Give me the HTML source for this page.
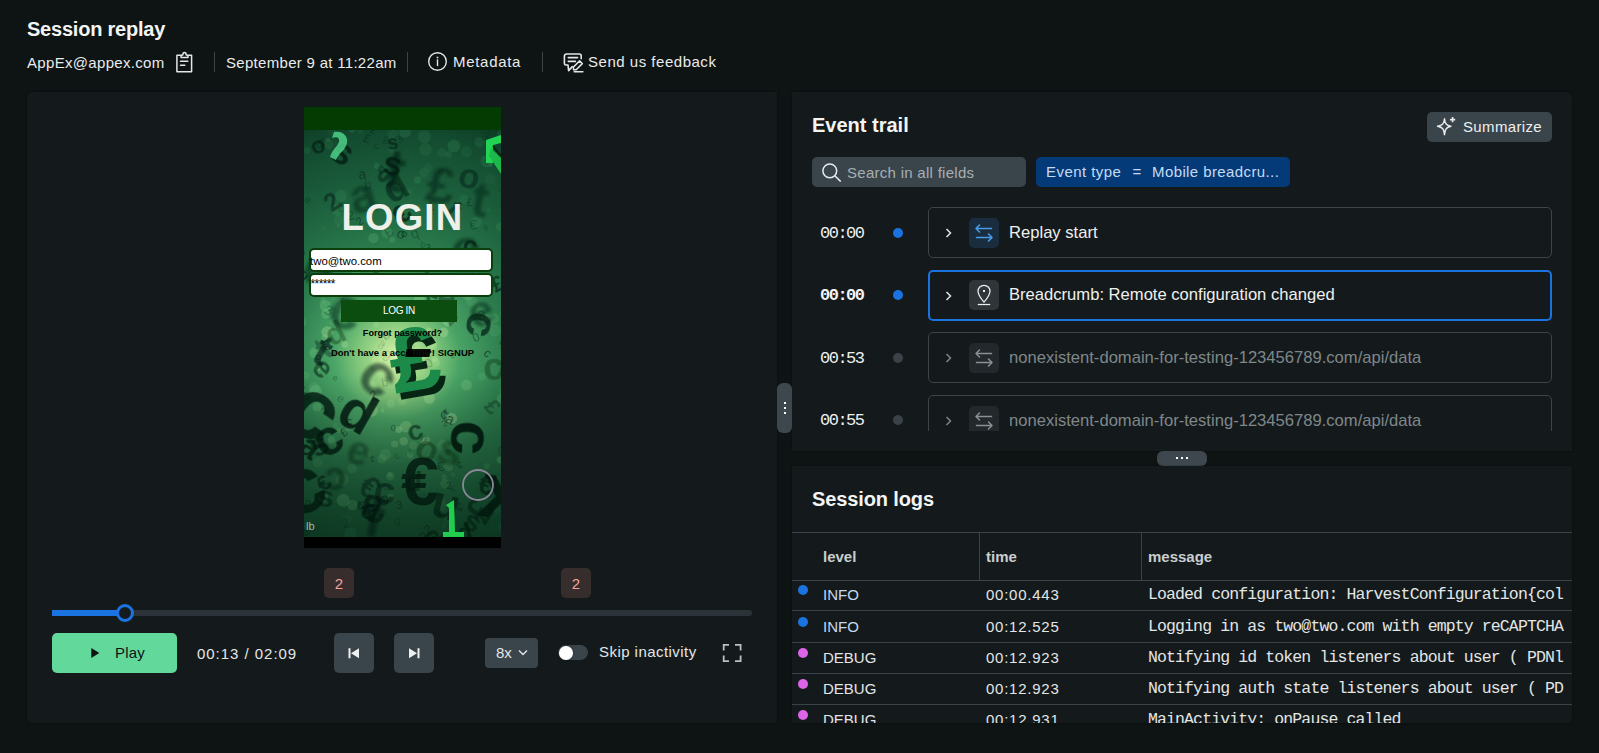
<!DOCTYPE html>
<html><head><meta charset="utf-8">
<style>
*{box-sizing:border-box;margin:0;padding:0}
html,body{width:1599px;height:753px;overflow:hidden;background:#0e1313;font-family:"Liberation Sans",sans-serif;color:#eef0f1}
.abs{position:absolute}
.t{position:absolute;white-space:nowrap;line-height:1}
.sep{position:absolute;width:1px;background:#3b4348}
.panel{position:absolute;background:#141a1b;box-shadow:0 0 1.5px rgba(0,0,0,0.55)}
.btn{position:absolute;background:#3a444b;border-radius:5px}
.card{position:absolute;left:928px;width:624px;height:51px;border:1px solid #3b444a;border-radius:5px;background:#141a1b}
.ico{position:absolute;left:40px;top:10px;width:30px;height:30px;border-radius:5px;background:#2b3134}
.mono{font-family:"Liberation Mono",monospace}
</style></head>
<body>
<!-- header -->
<div class="t" style="left:27px;top:19px;font-size:20px;letter-spacing:-0.22px;font-weight:700;color:#f3f4f4">Session replay</div>
<div class="t" style="left:27px;top:55px;font-size:15px;letter-spacing:0.32px;color:#e9ebec">AppEx@appex.com</div>
<div class="sep" style="left:214px;top:52px;height:20px"></div>
<div class="t" style="left:226px;top:55px;font-size:15px;letter-spacing:0.3px;color:#e9ebec">September 9 at 11:22am</div>
<div class="sep" style="left:407px;top:52px;height:20px"></div>
<div class="t" style="left:453px;top:54px;font-size:15px;letter-spacing:0.7px;color:#e9ebec">Metadata</div>
<div class="sep" style="left:542px;top:52px;height:20px"></div>
<div class="t" style="left:588px;top:54px;font-size:15px;letter-spacing:0.52px;color:#e9ebec">Send us feedback</div>


<svg class="abs" style="left:170px;top:48px" width="30" height="28" viewBox="0 0 30 28" fill="none" stroke="#e4e6e7" stroke-width="1.6" stroke-linejoin="round" stroke-linecap="round">
<path d="M11 7.2 H6.9 V23.8 H21.6 V7.2 H18" stroke-width="1.5"/>
<path d="M11 9.6 H18 V8.3 C18 7.6 17.5 7.1 16.7 7.1 H16.2 C16.2 5.4 15.5 4.6 14.5 4.6 C13.5 4.6 12.8 5.4 12.8 7.1 H12.3 C11.5 7.1 11 7.6 11 8.3 Z" stroke-width="1.5"/>
<path d="M10.5 13.3 H17.8 M10.5 17.3 H14.8" stroke-width="1.5"/>
</svg>
<svg class="abs" style="left:427px;top:51px" width="21" height="21" viewBox="0 0 21 21" fill="none" stroke="#e4e6e7" stroke-width="1.4">
<circle cx="10.5" cy="10.5" r="8.8"/>
<path d="M10.5 8.3 V15.1" stroke-width="1.4"/>
<rect x="9.7" y="5.7" width="1.6" height="1.6" fill="#e4e6e7" stroke="none"/>
</svg>
<svg class="abs" style="left:558px;top:48px" width="30" height="28" viewBox="0 0 30 28" fill="none" stroke="#e4e6e7" stroke-width="1.6" stroke-linejoin="round" stroke-linecap="round">
<path d="M23.2 10.8 V8 A2 2 0 0 0 21.2 6 H8.4 A2 2 0 0 0 6.4 8 V15.4 A1.6 1.6 0 0 0 8 17 H10 L10.6 22.6 L14.3 18.6"/>
<path d="M10.3 9.6 H19.6 M10.3 13.4 H17.4"/>
<path d="M21.6 12.9 L24.3 15.6 L18.2 21.7 H15.5 V19 Z" stroke-width="1.5"/>
<path d="M16.2 23.8 H24.9" stroke-width="1.5"/>
</svg>

<!-- left panel -->
<div class="panel" style="left:27px;top:92px;width:750px;height:631px;border-radius:5px 0 0 5px"></div>


<!-- phone -->
<div class="abs" style="left:304px;top:107px;width:197px;height:441px;overflow:hidden;background:#000">
  <div class="abs" style="left:0;top:0;width:197px;height:23px;background:#033b02"></div>
  <!--PHONEBG-->
<svg class="abs" style="left:0;top:23px" width="197" height="407" viewBox="0 0 197 407">
<defs>
<radialGradient id="g0" cx="92" cy="228" r="250" gradientUnits="userSpaceOnUse">
<stop offset="0" stop-color="#a8dc8c"/>
<stop offset="0.1" stop-color="#7cc679"/>
<stop offset="0.25" stop-color="#4aa466"/>
<stop offset="0.45" stop-color="#2a7a4c"/>
<stop offset="0.7" stop-color="#1b5e3c"/>
<stop offset="0.9" stop-color="#134b30"/>
<stop offset="1" stop-color="#0d3d26"/>
</radialGradient>
<radialGradient id="g1" cx="94" cy="228" r="62" gradientUnits="userSpaceOnUse">
<stop offset="0" stop-color="#e8f8b8" stop-opacity="0.8"/>
<stop offset="0.5" stop-color="#c8ec98" stop-opacity="0.35"/>
<stop offset="1" stop-color="#b8e890" stop-opacity="0"/>
</radialGradient>
<linearGradient id="g2" x1="0" y1="0" x2="0" y2="1">
<stop offset="0" stop-color="#000" stop-opacity="0"/>
<stop offset="0.6" stop-color="#000" stop-opacity="0"/>
<stop offset="1" stop-color="#021a0c" stop-opacity="0.5"/>
</linearGradient>
<filter id="b1" x="-30%" y="-30%" width="160%" height="160%"><feGaussianBlur stdDeviation="1.4"/></filter>
<filter id="b2" x="-30%" y="-30%" width="160%" height="160%"><feGaussianBlur stdDeviation="0.7"/></filter>
<filter id="b0" x="-30%" y="-30%" width="160%" height="160%"><feGaussianBlur stdDeviation="0.35"/></filter>
</defs>
<rect width="197" height="407" fill="url(#g0)"/>
<circle cx="88.6" cy="228.4" r="6.2" fill="#c8f5a8" fill-opacity="0.19" filter="url(#b2)"/>
<circle cx="100.1" cy="239.9" r="2.8" fill="#c8f5a8" fill-opacity="0.20" filter="url(#b2)"/>
<circle cx="125.4" cy="325.7" r="2.4" fill="#78d28a" fill-opacity="0.16" filter="url(#b2)"/>
<circle cx="13.8" cy="332.6" r="5.1" fill="#78d28a" fill-opacity="0.11" filter="url(#b2)"/>
<circle cx="198.3" cy="397.3" r="4.9" fill="#4fb070" fill-opacity="0.13" filter="url(#b2)"/>
<circle cx="27.6" cy="1.3" r="4.4" fill="#4fb070" fill-opacity="0.07" filter="url(#b2)"/>
<circle cx="34.4" cy="95.9" r="2.1" fill="#4fb070" fill-opacity="0.12" filter="url(#b2)"/>
<circle cx="86.2" cy="346.3" r="4.3" fill="#78d28a" fill-opacity="0.23" filter="url(#b2)"/>
<circle cx="98.5" cy="271.2" r="4.1" fill="#c8f5a8" fill-opacity="0.16" filter="url(#b2)"/>
<circle cx="201.5" cy="410.2" r="5.8" fill="#4fb070" fill-opacity="0.14" filter="url(#b2)"/>
<circle cx="60.3" cy="90.8" r="3.3" fill="#4fb070" fill-opacity="0.07" filter="url(#b2)"/>
<circle cx="153.6" cy="162.0" r="5.8" fill="#78d28a" fill-opacity="0.18" filter="url(#b2)"/>
<circle cx="193.3" cy="348.3" r="2.0" fill="#78d28a" fill-opacity="0.14" filter="url(#b2)"/>
<circle cx="183.4" cy="191.0" r="6.4" fill="#78d28a" fill-opacity="0.18" filter="url(#b2)"/>
<circle cx="10.1" cy="257.5" r="5.5" fill="#78d28a" fill-opacity="0.15" filter="url(#b2)"/>
<circle cx="13.0" cy="133.7" r="6.3" fill="#78d28a" fill-opacity="0.25" filter="url(#b2)"/>
<circle cx="19.4" cy="97.7" r="2.5" fill="#4fb070" fill-opacity="0.07" filter="url(#b2)"/>
<circle cx="160.0" cy="69.1" r="4.5" fill="#4fb070" fill-opacity="0.11" filter="url(#b2)"/>
<circle cx="34.5" cy="300.2" r="2.6" fill="#78d28a" fill-opacity="0.23" filter="url(#b2)"/>
<circle cx="19.1" cy="170.5" r="3.0" fill="#78d28a" fill-opacity="0.15" filter="url(#b2)"/>
<circle cx="196.0" cy="330.0" r="3.4" fill="#78d28a" fill-opacity="0.28" filter="url(#b2)"/>
<circle cx="38.6" cy="159.4" r="5.8" fill="#78d28a" fill-opacity="0.23" filter="url(#b2)"/>
<circle cx="15.8" cy="407.5" r="3.0" fill="#4fb070" fill-opacity="0.09" filter="url(#b2)"/>
<circle cx="154.9" cy="132.2" r="3.3" fill="#78d28a" fill-opacity="0.11" filter="url(#b2)"/>
<circle cx="13.7" cy="238.0" r="3.1" fill="#c8f5a8" fill-opacity="0.22" filter="url(#b2)"/>
<circle cx="71.9" cy="184.0" r="6.3" fill="#c8f5a8" fill-opacity="0.20" filter="url(#b2)"/>
<circle cx="113.9" cy="356.3" r="2.8" fill="#78d28a" fill-opacity="0.13" filter="url(#b2)"/>
<circle cx="183.0" cy="336.0" r="3.1" fill="#78d28a" fill-opacity="0.14" filter="url(#b2)"/>
<circle cx="148.1" cy="387.1" r="2.9" fill="#4fb070" fill-opacity="0.17" filter="url(#b2)"/>
<circle cx="177.6" cy="246.7" r="3.9" fill="#78d28a" fill-opacity="0.12" filter="url(#b2)"/>
<circle cx="3.0" cy="396.4" r="3.1" fill="#4fb070" fill-opacity="0.14" filter="url(#b2)"/>
<circle cx="48.2" cy="338.5" r="4.7" fill="#78d28a" fill-opacity="0.16" filter="url(#b2)"/>
<circle cx="31.3" cy="295.4" r="2.3" fill="#78d28a" fill-opacity="0.15" filter="url(#b2)"/>
<circle cx="110.8" cy="350.5" r="4.8" fill="#78d28a" fill-opacity="0.16" filter="url(#b2)"/>
<circle cx="184.9" cy="80.1" r="2.1" fill="#4fb070" fill-opacity="0.09" filter="url(#b2)"/>
<circle cx="87.3" cy="20.2" r="2.8" fill="#4fb070" fill-opacity="0.10" filter="url(#b2)"/>
<circle cx="113.4" cy="49.9" r="3.6" fill="#4fb070" fill-opacity="0.17" filter="url(#b2)"/>
<circle cx="198.0" cy="268.9" r="5.1" fill="#78d28a" fill-opacity="0.22" filter="url(#b2)"/>
<circle cx="24.1" cy="9.6" r="2.1" fill="#4fb070" fill-opacity="0.17" filter="url(#b2)"/>
<circle cx="140.1" cy="396.5" r="2.1" fill="#4fb070" fill-opacity="0.14" filter="url(#b2)"/>
<circle cx="94.8" cy="299.6" r="3.4" fill="#c8f5a8" fill-opacity="0.30" filter="url(#b2)"/>
<circle cx="10.6" cy="222.7" r="5.3" fill="#78d28a" fill-opacity="0.28" filter="url(#b2)"/>
<circle cx="147.6" cy="288.4" r="5.6" fill="#c8f5a8" fill-opacity="0.28" filter="url(#b2)"/>
<circle cx="67.8" cy="280.7" r="6.1" fill="#c8f5a8" fill-opacity="0.27" filter="url(#b2)"/>
<circle cx="81.4" cy="324.7" r="5.9" fill="#78d28a" fill-opacity="0.21" filter="url(#b2)"/>
<circle cx="124.4" cy="154.4" r="4.6" fill="#78d28a" fill-opacity="0.22" filter="url(#b2)"/>
<circle cx="11.6" cy="261.6" r="6.5" fill="#78d28a" fill-opacity="0.28" filter="url(#b2)"/>
<circle cx="145.7" cy="157.0" r="5.3" fill="#78d28a" fill-opacity="0.22" filter="url(#b2)"/>
<circle cx="86.2" cy="344.6" r="2.4" fill="#78d28a" fill-opacity="0.25" filter="url(#b2)"/>
<circle cx="1.2" cy="245.7" r="4.2" fill="#78d28a" fill-opacity="0.15" filter="url(#b2)"/>
<circle cx="139.6" cy="202.4" r="4.8" fill="#c8f5a8" fill-opacity="0.28" filter="url(#b2)"/>
<circle cx="48.0" cy="-0.3" r="3.4" fill="#4fb070" fill-opacity="0.14" filter="url(#b2)"/>
<circle cx="36.9" cy="65.7" r="6.1" fill="#4fb070" fill-opacity="0.14" filter="url(#b2)"/>
<circle cx="86.5" cy="366.9" r="3.5" fill="#78d28a" fill-opacity="0.23" filter="url(#b2)"/>
<circle cx="36.1" cy="174.7" r="5.6" fill="#78d28a" fill-opacity="0.28" filter="url(#b2)"/>
<circle cx="177.2" cy="155.3" r="4.6" fill="#78d28a" fill-opacity="0.16" filter="url(#b2)"/>
<circle cx="23.2" cy="202.0" r="5.8" fill="#c8f5a8" fill-opacity="0.27" filter="url(#b2)"/>
<circle cx="142.2" cy="391.2" r="3.2" fill="#4fb070" fill-opacity="0.08" filter="url(#b2)"/>
<circle cx="88.3" cy="109.7" r="3.0" fill="#78d28a" fill-opacity="0.18" filter="url(#b2)"/>
<circle cx="124.5" cy="200.9" r="3.4" fill="#c8f5a8" fill-opacity="0.27" filter="url(#b2)"/>
<circle cx="198.3" cy="183.7" r="2.3" fill="#78d28a" fill-opacity="0.11" filter="url(#b2)"/>
<circle cx="175.7" cy="12.3" r="5.2" fill="#4fb070" fill-opacity="0.13" filter="url(#b2)"/>
<circle cx="59.0" cy="325.1" r="2.1" fill="#78d28a" fill-opacity="0.13" filter="url(#b2)"/>
<circle cx="89.2" cy="5.3" r="5.7" fill="#4fb070" fill-opacity="0.09" filter="url(#b2)"/>
<circle cx="24.2" cy="14.6" r="4.8" fill="#4fb070" fill-opacity="0.11" filter="url(#b2)"/>
<circle cx="125.4" cy="268.2" r="5.6" fill="#c8f5a8" fill-opacity="0.29" filter="url(#b2)"/>
<circle cx="136.7" cy="78.1" r="4.1" fill="#4fb070" fill-opacity="0.08" filter="url(#b2)"/>
<circle cx="-2.8" cy="191.9" r="5.2" fill="#78d28a" fill-opacity="0.14" filter="url(#b2)"/>
<circle cx="51.4" cy="139.2" r="5.1" fill="#78d28a" fill-opacity="0.20" filter="url(#b2)"/>
<circle cx="122.2" cy="310.3" r="3.8" fill="#c8f5a8" fill-opacity="0.26" filter="url(#b2)"/>
<circle cx="182.6" cy="31.4" r="6.2" fill="#4fb070" fill-opacity="0.15" filter="url(#b2)"/>
<circle cx="21.9" cy="184.1" r="4.8" fill="#78d28a" fill-opacity="0.28" filter="url(#b2)"/>
<circle cx="73.0" cy="232.2" r="6.0" fill="#c8f5a8" fill-opacity="0.26" filter="url(#b2)"/>
<circle cx="190.5" cy="188.4" r="4.9" fill="#78d28a" fill-opacity="0.14" filter="url(#b2)"/>
<circle cx="144.4" cy="336.3" r="4.9" fill="#78d28a" fill-opacity="0.24" filter="url(#b2)"/>
<circle cx="39.2" cy="370.3" r="6.4" fill="#78d28a" fill-opacity="0.30" filter="url(#b2)"/>
<circle cx="106.2" cy="324.8" r="3.4" fill="#78d28a" fill-opacity="0.28" filter="url(#b2)"/>
<circle cx="172.1" cy="140.3" r="2.4" fill="#78d28a" fill-opacity="0.19" filter="url(#b2)"/>
<circle cx="108.9" cy="315.4" r="4.2" fill="#c8f5a8" fill-opacity="0.11" filter="url(#b2)"/>
<circle cx="162.5" cy="21.7" r="5.6" fill="#4fb070" fill-opacity="0.08" filter="url(#b2)"/>
<circle cx="64.3" cy="323.6" r="2.6" fill="#78d28a" fill-opacity="0.13" filter="url(#b2)"/>
<circle cx="101.9" cy="296.7" r="5.8" fill="#c8f5a8" fill-opacity="0.24" filter="url(#b2)"/>
<circle cx="190.8" cy="200.4" r="6.3" fill="#78d28a" fill-opacity="0.12" filter="url(#b2)"/>
<circle cx="40.8" cy="214.6" r="3.3" fill="#c8f5a8" fill-opacity="0.25" filter="url(#b2)"/>
<circle cx="127.2" cy="213.0" r="5.8" fill="#c8f5a8" fill-opacity="0.21" filter="url(#b2)"/>
<circle cx="59.5" cy="154.0" r="5.8" fill="#78d28a" fill-opacity="0.28" filter="url(#b2)"/>
<circle cx="38.1" cy="349.8" r="6.4" fill="#78d28a" fill-opacity="0.20" filter="url(#b2)"/>
<circle cx="113.6" cy="78.8" r="4.4" fill="#4fb070" fill-opacity="0.12" filter="url(#b2)"/>
<circle cx="120.3" cy="6.6" r="6.4" fill="#4fb070" fill-opacity="0.12" filter="url(#b2)"/>
<circle cx="77.9" cy="329.0" r="4.5" fill="#78d28a" fill-opacity="0.20" filter="url(#b2)"/>
<circle cx="138.0" cy="22.5" r="4.4" fill="#4fb070" fill-opacity="0.11" filter="url(#b2)"/>
<circle cx="193.1" cy="380.1" r="3.2" fill="#4fb070" fill-opacity="0.12" filter="url(#b2)"/>
<circle cx="21.3" cy="175.8" r="5.7" fill="#78d28a" fill-opacity="0.28" filter="url(#b2)"/>
<circle cx="93.6" cy="127.3" r="2.9" fill="#78d28a" fill-opacity="0.22" filter="url(#b2)"/>
<circle cx="186.5" cy="49.0" r="5.5" fill="#4fb070" fill-opacity="0.06" filter="url(#b2)"/>
<circle cx="35.2" cy="89.8" r="5.1" fill="#4fb070" fill-opacity="0.10" filter="url(#b2)"/>
<circle cx="68.6" cy="253.4" r="2.5" fill="#c8f5a8" fill-opacity="0.25" filter="url(#b2)"/>
<circle cx="20.4" cy="207.9" r="3.1" fill="#c8f5a8" fill-opacity="0.14" filter="url(#b2)"/>
<circle cx="104.8" cy="177.1" r="3.7" fill="#c8f5a8" fill-opacity="0.18" filter="url(#b2)"/>
<circle cx="104.6" cy="61.6" r="2.9" fill="#4fb070" fill-opacity="0.14" filter="url(#b2)"/>
<circle cx="127.2" cy="215.9" r="5.8" fill="#c8f5a8" fill-opacity="0.22" filter="url(#b2)"/>
<circle cx="172.4" cy="92.0" r="5.3" fill="#4fb070" fill-opacity="0.16" filter="url(#b2)"/>
<circle cx="181.9" cy="126.7" r="3.4" fill="#78d28a" fill-opacity="0.28" filter="url(#b2)"/>
<circle cx="40.2" cy="411.3" r="6.0" fill="#4fb070" fill-opacity="0.08" filter="url(#b2)"/>
<circle cx="44.5" cy="298.0" r="3.2" fill="#c8f5a8" fill-opacity="0.12" filter="url(#b2)"/>
<circle cx="167.3" cy="170.8" r="5.6" fill="#78d28a" fill-opacity="0.13" filter="url(#b2)"/>
<circle cx="78.4" cy="280.7" r="2.1" fill="#c8f5a8" fill-opacity="0.14" filter="url(#b2)"/>
<circle cx="136.3" cy="375.0" r="6.4" fill="#78d28a" fill-opacity="0.12" filter="url(#b2)"/>
<circle cx="99.7" cy="311.2" r="4.3" fill="#c8f5a8" fill-opacity="0.24" filter="url(#b2)"/>
<circle cx="34.1" cy="24.4" r="2.5" fill="#4fb070" fill-opacity="0.06" filter="url(#b2)"/>
<circle cx="109.2" cy="209.7" r="4.6" fill="#c8f5a8" fill-opacity="0.13" filter="url(#b2)"/>
<circle cx="33.2" cy="80.0" r="5.8" fill="#4fb070" fill-opacity="0.18" filter="url(#b2)"/>
<circle cx="186.9" cy="34.7" r="2.3" fill="#4fb070" fill-opacity="0.17" filter="url(#b2)"/>
<circle cx="90.6" cy="313.9" r="3.5" fill="#c8f5a8" fill-opacity="0.19" filter="url(#b2)"/>
<circle cx="101.7" cy="174.3" r="4.7" fill="#c8f5a8" fill-opacity="0.10" filter="url(#b2)"/>
<circle cx="140.1" cy="347.1" r="2.8" fill="#78d28a" fill-opacity="0.19" filter="url(#b2)"/>
<circle cx="148.0" cy="164.0" r="2.9" fill="#78d28a" fill-opacity="0.13" filter="url(#b2)"/>
<circle cx="101.1" cy="1.4" r="6.0" fill="#4fb070" fill-opacity="0.16" filter="url(#b2)"/>
<circle cx="140.9" cy="353.9" r="4.8" fill="#78d28a" fill-opacity="0.18" filter="url(#b2)"/>
<circle cx="119.1" cy="205.3" r="6.4" fill="#c8f5a8" fill-opacity="0.26" filter="url(#b2)"/>
<circle cx="48.5" cy="375.0" r="5.3" fill="#78d28a" fill-opacity="0.26" filter="url(#b2)"/>
<circle cx="163.6" cy="164.2" r="6.0" fill="#78d28a" fill-opacity="0.28" filter="url(#b2)"/>
<circle cx="138.8" cy="315.0" r="5.4" fill="#78d28a" fill-opacity="0.18" filter="url(#b2)"/>
<circle cx="144.6" cy="24.4" r="3.5" fill="#4fb070" fill-opacity="0.12" filter="url(#b2)"/>
<circle cx="-2.8" cy="143.3" r="4.9" fill="#78d28a" fill-opacity="0.22" filter="url(#b2)"/>
<circle cx="43.0" cy="388.9" r="5.0" fill="#4fb070" fill-opacity="0.10" filter="url(#b2)"/>
<circle cx="131.6" cy="232.5" r="4.4" fill="#c8f5a8" fill-opacity="0.18" filter="url(#b2)"/>
<circle cx="202.0" cy="262.8" r="5.2" fill="#78d28a" fill-opacity="0.25" filter="url(#b2)"/>
<circle cx="197.9" cy="4.5" r="4.8" fill="#4fb070" fill-opacity="0.15" filter="url(#b2)"/>
<circle cx="48.1" cy="162.4" r="2.2" fill="#78d28a" fill-opacity="0.14" filter="url(#b2)"/>
<circle cx="72.8" cy="36.1" r="3.1" fill="#4fb070" fill-opacity="0.17" filter="url(#b2)"/>
<circle cx="108.9" cy="206.8" r="6.4" fill="#c8f5a8" fill-opacity="0.21" filter="url(#b2)"/>
<circle cx="201.0" cy="261.1" r="5.6" fill="#78d28a" fill-opacity="0.12" filter="url(#b2)"/>
<circle cx="118.7" cy="311.6" r="2.2" fill="#c8f5a8" fill-opacity="0.29" filter="url(#b2)"/>
<circle cx="28.1" cy="191.7" r="2.8" fill="#78d28a" fill-opacity="0.20" filter="url(#b2)"/>
<circle cx="121.5" cy="19.4" r="6.3" fill="#4fb070" fill-opacity="0.11" filter="url(#b2)"/>
<circle cx="104.0" cy="244.3" r="3.6" fill="#c8f5a8" fill-opacity="0.16" filter="url(#b2)"/>
<circle cx="130.6" cy="228.8" r="3.3" fill="#c8f5a8" fill-opacity="0.24" filter="url(#b2)"/>
<circle cx="56.3" cy="0.8" r="3.1" fill="#4fb070" fill-opacity="0.07" filter="url(#b2)"/>
<circle cx="27.4" cy="309.7" r="3.8" fill="#78d28a" fill-opacity="0.28" filter="url(#b2)"/>
<circle cx="149.9" cy="15.9" r="6.4" fill="#4fb070" fill-opacity="0.17" filter="url(#b2)"/>
<circle cx="10.2" cy="372.6" r="3.9" fill="#4fb070" fill-opacity="0.12" filter="url(#b2)"/>
<circle cx="196.4" cy="96.6" r="4.4" fill="#4fb070" fill-opacity="0.17" filter="url(#b2)"/>
<circle cx="144.6" cy="190.3" r="6.4" fill="#c8f5a8" fill-opacity="0.26" filter="url(#b2)"/>
<circle cx="120.0" cy="43.0" r="4.8" fill="#4fb070" fill-opacity="0.11" filter="url(#b2)"/>
<circle cx="37.2" cy="16.7" r="4.4" fill="#4fb070" fill-opacity="0.07" filter="url(#b2)"/>
<circle cx="86.7" cy="273.5" r="4.0" fill="#c8f5a8" fill-opacity="0.15" filter="url(#b2)"/>
<circle cx="115.5" cy="169.9" r="5.5" fill="#c8f5a8" fill-opacity="0.21" filter="url(#b2)"/>
<circle cx="201.5" cy="392.2" r="5.3" fill="#4fb070" fill-opacity="0.09" filter="url(#b2)"/>
<circle cx="18.6" cy="367.3" r="5.5" fill="#78d28a" fill-opacity="0.22" filter="url(#b2)"/>
<circle cx="69.4" cy="108.2" r="5.1" fill="#78d28a" fill-opacity="0.21" filter="url(#b2)"/>
<circle cx="117.5" cy="259.0" r="5.4" fill="#c8f5a8" fill-opacity="0.14" filter="url(#b2)"/>
<circle cx="46.5" cy="403.5" r="6.1" fill="#4fb070" fill-opacity="0.17" filter="url(#b2)"/>
<circle cx="3.2" cy="20.3" r="3.2" fill="#4fb070" fill-opacity="0.11" filter="url(#b2)"/>
<circle cx="124.0" cy="37.7" r="4.4" fill="#4fb070" fill-opacity="0.07" filter="url(#b2)"/>
<circle cx="12.9" cy="277.0" r="4.5" fill="#78d28a" fill-opacity="0.23" filter="url(#b2)"/>
<circle cx="72.2" cy="194.6" r="2.9" fill="#c8f5a8" fill-opacity="0.17" filter="url(#b2)"/>
<circle cx="149.2" cy="344.7" r="2.3" fill="#78d28a" fill-opacity="0.12" filter="url(#b2)"/>
<circle cx="162.5" cy="255.1" r="5.5" fill="#c8f5a8" fill-opacity="0.14" filter="url(#b2)"/>
<circle cx="82.8" cy="102.6" r="5.6" fill="#78d28a" fill-opacity="0.17" filter="url(#b2)"/>
<text x="127.0" y="407.5" font-family="Liberation Sans" font-size="9.6" fill="#05281a" fill-opacity="0.59" transform="rotate(26 127.0 407.5)">2</text>
<text x="32.1" y="269.4" font-family="Liberation Sans" font-size="11.6" fill="#05281a" fill-opacity="0.33" transform="rotate(38 32.1 269.4)">e</text>
<text x="11.8" y="232.5" font-family="Liberation Sans" font-size="10.9" fill="#05281a" fill-opacity="0.59" transform="rotate(-4 11.8 232.5)">9</text>
<text x="-3.1" y="127.8" font-family="Liberation Sans" font-size="14.3" fill="#05281a" fill-opacity="0.41" transform="rotate(-42 -3.1 127.8)">0</text>
<text x="141.4" y="285.9" font-family="Liberation Sans" font-size="9.3" fill="#05281a" fill-opacity="0.53" transform="rotate(-28 141.4 285.9)">¢</text>
<text x="61.1" y="373.4" font-family="Liberation Sans" font-size="9.6" fill="#05281a" fill-opacity="0.62" transform="rotate(7 61.1 373.4)">e</text>
<text x="184.9" y="376.3" font-family="Liberation Sans" font-size="10.5" fill="#05281a" fill-opacity="0.46" transform="rotate(49 184.9 376.3)">b</text>
<text x="39.7" y="398.7" font-family="Liberation Sans" font-size="12.8" fill="#05281a" fill-opacity="0.43" transform="rotate(-25 39.7 398.7)">2</text>
<text x="68.8" y="149.7" font-family="Liberation Sans" font-size="10.2" fill="#05281a" fill-opacity="0.56" transform="rotate(30 68.8 149.7)">a</text>
<text x="69.4" y="160.8" font-family="Liberation Sans" font-size="8.2" fill="#05281a" fill-opacity="0.36" transform="rotate(6 69.4 160.8)">0</text>
<text x="148.3" y="362.9" font-family="Liberation Sans" font-size="9.3" fill="#05281a" fill-opacity="0.32" transform="rotate(-28 148.3 362.9)">€</text>
<text x="27.1" y="121.9" font-family="Liberation Sans" font-size="7.2" fill="#05281a" fill-opacity="0.32" transform="rotate(30 27.1 121.9)">q</text>
<text x="105.5" y="324.7" font-family="Liberation Sans" font-size="7.7" fill="#05281a" fill-opacity="0.34" transform="rotate(-23 105.5 324.7)">£</text>
<text x="58.4" y="10.7" font-family="Liberation Sans" font-size="12.2" fill="#05281a" fill-opacity="0.53" transform="rotate(25 58.4 10.7)">£</text>
<text x="44.6" y="90.8" font-family="Liberation Sans" font-size="13.1" fill="#05281a" fill-opacity="0.46" transform="rotate(-16 44.6 90.8)">2</text>
<text x="65.8" y="332.6" font-family="Liberation Sans" font-size="9.7" fill="#05281a" fill-opacity="0.49" transform="rotate(-1 65.8 332.6)">¢</text>
<text x="140.6" y="291.8" font-family="Liberation Sans" font-size="14.3" fill="#05281a" fill-opacity="0.64" transform="rotate(26 140.6 291.8)">a</text>
<text x="65.5" y="1.6" font-family="Liberation Sans" font-size="10.0" fill="#05281a" fill-opacity="0.64" transform="rotate(39 65.5 1.6)">£</text>
<text x="124.3" y="215.8" font-family="Liberation Sans" font-size="12.7" fill="#05281a" fill-opacity="0.62" transform="rotate(-39 124.3 215.8)">b</text>
<text x="179.9" y="101.2" font-family="Liberation Sans" font-size="8.3" fill="#05281a" fill-opacity="0.36" transform="rotate(-12 179.9 101.2)">9</text>
<text x="36.3" y="175.1" font-family="Liberation Sans" font-size="9.3" fill="#05281a" fill-opacity="0.56" transform="rotate(-3 36.3 175.1)">€</text>
<text x="56.3" y="64.1" font-family="Liberation Sans" font-size="14.4" fill="#05281a" fill-opacity="0.31" transform="rotate(25 56.3 64.1)">€</text>
<text x="92.2" y="329.8" font-family="Liberation Sans" font-size="9.5" fill="#05281a" fill-opacity="0.38" transform="rotate(-32 92.2 329.8)">c</text>
<text x="42.6" y="295.5" font-family="Liberation Sans" font-size="11.8" fill="#05281a" fill-opacity="0.61" transform="rotate(-6 42.6 295.5)">c</text>
<text x="76.3" y="375.2" font-family="Liberation Sans" font-size="14.5" fill="#05281a" fill-opacity="0.59" transform="rotate(5 76.3 375.2)">9</text>
<text x="91.9" y="107.3" font-family="Liberation Sans" font-size="14.1" fill="#05281a" fill-opacity="0.57" transform="rotate(16 91.9 107.3)">o</text>
<text x="13.7" y="355.4" font-family="Liberation Sans" font-size="10.2" fill="#05281a" fill-opacity="0.58" transform="rotate(45 13.7 355.4)">c</text>
<text x="72.8" y="217.4" font-family="Liberation Sans" font-size="11.1" fill="#05281a" fill-opacity="0.32" transform="rotate(29 72.8 217.4)">d</text>
<text x="181.7" y="367.6" font-family="Liberation Sans" font-size="14.0" fill="#05281a" fill-opacity="0.39" transform="rotate(-5 181.7 367.6)">o</text>
<text x="80.1" y="360.4" font-family="Liberation Sans" font-size="10.3" fill="#05281a" fill-opacity="0.39" transform="rotate(-18 80.1 360.4)">b</text>
<text x="170.6" y="212.6" font-family="Liberation Sans" font-size="12.1" fill="#05281a" fill-opacity="0.49" transform="rotate(-23 170.6 212.6)">0</text>
<text x="25.4" y="317.4" font-family="Liberation Sans" font-size="7.0" fill="#05281a" fill-opacity="0.35" transform="rotate(42 25.4 317.4)">q</text>
<text x="20.9" y="144.9" font-family="Liberation Sans" font-size="11.9" fill="#05281a" fill-opacity="0.47" transform="rotate(-40 20.9 144.9)">2</text>
<text x="89.7" y="393.7" font-family="Liberation Sans" font-size="11.7" fill="#05281a" fill-opacity="0.31" transform="rotate(1 89.7 393.7)">q</text>
<text x="32.9" y="79.5" font-family="Liberation Sans" font-size="12.5" fill="#05281a" fill-opacity="0.37" transform="rotate(33 32.9 79.5)">b</text>
<text x="104.8" y="216.6" font-family="Liberation Sans" font-size="8.3" fill="#05281a" fill-opacity="0.41" transform="rotate(46 104.8 216.6)">q</text>
<text x="76.9" y="229.2" font-family="Liberation Sans" font-size="15.0" fill="#05281a" fill-opacity="0.43" transform="rotate(22 76.9 229.2)">9</text>
<text x="133.8" y="43.6" font-family="Liberation Sans" font-size="10.2" fill="#05281a" fill-opacity="0.57" transform="rotate(25 133.8 43.6)">e</text>
<text x="19.6" y="183.5" font-family="Liberation Sans" font-size="13.9" fill="#05281a" fill-opacity="0.38" transform="rotate(21 19.6 183.5)">3</text>
<text x="109.0" y="188.7" font-family="Liberation Sans" font-size="7.1" fill="#05281a" fill-opacity="0.37" transform="rotate(30 109.0 188.7)">q</text>
<text x="119.4" y="119.6" font-family="Liberation Sans" font-size="10.0" fill="#05281a" fill-opacity="0.63" transform="rotate(25 119.4 119.6)">2</text>
<text x="147.5" y="228.9" font-family="Liberation Sans" font-size="7.7" fill="#05281a" fill-opacity="0.56" transform="rotate(-30 147.5 228.9)">c</text>
<text x="61.5" y="389.4" font-family="Liberation Sans" font-size="11.5" fill="#05281a" fill-opacity="0.46" transform="rotate(14 61.5 389.4)">3</text>
<text x="72.3" y="42.0" font-family="Liberation Sans" font-size="12.0" fill="#05281a" fill-opacity="0.55" transform="rotate(18 72.3 42.0)">¢</text>
<text x="31.3" y="165.7" font-family="Liberation Sans" font-size="13.7" fill="#05281a" fill-opacity="0.34" transform="rotate(20 31.3 165.7)">0</text>
<text x="1.5" y="406.8" font-family="Liberation Sans" font-size="10.5" fill="#05281a" fill-opacity="0.62" transform="rotate(-43 1.5 406.8)">b</text>
<text x="81.3" y="210.8" font-family="Liberation Sans" font-size="12.2" fill="#05281a" fill-opacity="0.54" transform="rotate(-35 81.3 210.8)">b</text>
<text x="92.5" y="379.6" font-family="Liberation Sans" font-size="12.0" fill="#05281a" fill-opacity="0.54" transform="rotate(-10 92.5 379.6)">3</text>
<text x="193.4" y="325.3" font-family="Liberation Sans" font-size="12.3" fill="#05281a" fill-opacity="0.39" transform="rotate(3 193.4 325.3)">0</text>
<text x="33.1" y="126.4" font-family="Liberation Sans" font-size="10.5" fill="#05281a" fill-opacity="0.48" transform="rotate(-12 33.1 126.4)">2</text>
<text x="154.3" y="340.0" font-family="Liberation Sans" font-size="11.9" fill="#05281a" fill-opacity="0.49" transform="rotate(-25 154.3 340.0)">¢</text>
<text x="55.3" y="96.4" font-family="Liberation Sans" font-size="11.9" fill="#05281a" fill-opacity="0.55" transform="rotate(-36 55.3 96.4)">2</text>
<text x="194.3" y="212.6" font-family="Liberation Sans" font-size="12.7" fill="#05281a" fill-opacity="0.50" transform="rotate(44 194.3 212.6)">q</text>
<text x="0.4" y="271.7" font-family="Liberation Sans" font-size="13.2" fill="#05281a" fill-opacity="0.50" transform="rotate(-26 0.4 271.7)">¢</text>
<text x="135.8" y="135.6" font-family="Liberation Sans" font-size="14.4" fill="#05281a" fill-opacity="0.61" transform="rotate(-23 135.8 135.6)">o</text>
<text x="86.4" y="300.7" font-family="Liberation Sans" font-size="8.9" fill="#05281a" fill-opacity="0.50" transform="rotate(4 86.4 300.7)">0</text>
<text x="108.2" y="108.9" font-family="Liberation Sans" font-size="14.3" fill="#05281a" fill-opacity="0.35" transform="rotate(-17 108.2 108.9)">q</text>
<text x="183.7" y="1.6" font-family="Liberation Sans" font-size="12.5" fill="#05281a" fill-opacity="0.50" transform="rotate(-26 183.7 1.6)">o</text>
<text x="162.8" y="76.5" font-family="Liberation Sans" font-size="11.4" fill="#05281a" fill-opacity="0.44" transform="rotate(-5 162.8 76.5)">£</text>
<text x="153.1" y="383.1" font-family="Liberation Sans" font-size="15.0" fill="#05281a" fill-opacity="0.53" transform="rotate(-19 153.1 383.1)">¢</text>
<text x="144.0" y="157.2" font-family="Liberation Sans" font-size="11.7" fill="#05281a" fill-opacity="0.36" transform="rotate(26 144.0 157.2)">b</text>
<text x="78.2" y="13.6" font-family="Liberation Sans" font-size="11.2" fill="#05281a" fill-opacity="0.36" transform="rotate(7 78.2 13.6)">£</text>
<text x="100.0" y="108.6" font-family="Liberation Sans" font-size="11.5" fill="#05281a" fill-opacity="0.57" transform="rotate(-45 100.0 108.6)">o</text>
<text x="140.8" y="324.5" font-family="Liberation Sans" font-size="10.2" fill="#05281a" fill-opacity="0.46" transform="rotate(10 140.8 324.5)">e</text>
<text x="78.1" y="257.0" font-family="Liberation Sans" font-size="12.5" fill="#05281a" fill-opacity="0.40" transform="rotate(-9 78.1 257.0)">b</text>
<text x="174.6" y="191.0" font-family="Liberation Sans" font-size="14.2" fill="#05281a" fill-opacity="0.45" transform="rotate(-9 174.6 191.0)">3</text>
<text x="109.3" y="373.0" font-family="Liberation Sans" font-size="11.2" fill="#05281a" fill-opacity="0.45" transform="rotate(2 109.3 373.0)">2</text>
<text x="-0.1" y="373.8" font-family="Liberation Sans" font-size="9.4" fill="#05281a" fill-opacity="0.56" transform="rotate(40 -0.1 373.8)">0</text>
<text x="115.7" y="309.8" font-family="Liberation Sans" font-size="9.4" fill="#05281a" fill-opacity="0.39" transform="rotate(38 115.7 309.8)">0</text>
<text x="165.6" y="99.8" font-family="Liberation Sans" font-size="14.0" fill="#05281a" fill-opacity="0.34" transform="rotate(-2 165.6 99.8)">€</text>
<text x="178.8" y="224.5" font-family="Liberation Sans" font-size="12.3" fill="#05281a" fill-opacity="0.65" transform="rotate(38 178.8 224.5)">c</text>
<text x="142.6" y="359.0" font-family="Liberation Sans" font-size="10.0" fill="#05281a" fill-opacity="0.58" transform="rotate(-8 142.6 359.0)">2</text>
<text x="39.8" y="307.6" font-family="Liberation Sans" font-size="11.5" fill="#05281a" fill-opacity="0.58" transform="rotate(-40 39.8 307.6)">£</text>
<text x="20.0" y="221.5" font-family="Liberation Sans" font-size="14.6" fill="#05281a" fill-opacity="0.55" transform="rotate(-20 20.0 221.5)">€</text>
<text x="-0.2" y="70.9" font-family="Liberation Sans" font-size="10.5" fill="#05281a" fill-opacity="0.44" transform="rotate(32 -0.2 70.9)">e</text>
<text x="67.0" y="241.2" font-family="Liberation Sans" font-size="7.4" fill="#05281a" fill-opacity="0.41" transform="rotate(-5 67.0 241.2)">€</text>
<text x="60.5" y="59.0" font-family="Liberation Sans" font-size="13.2" fill="#05281a" fill-opacity="0.37" transform="rotate(-3 60.5 59.0)">b</text>
<text x="54.7" y="380.1" font-family="Liberation Sans" font-size="14.2" fill="#05281a" fill-opacity="0.60" transform="rotate(-18 54.7 380.1)">c</text>
<text x="176.7" y="6.6" font-family="Liberation Sans" font-size="12.1" fill="#05281a" fill-opacity="0.37" transform="rotate(50 176.7 6.6)">3</text>
<text x="122.7" y="78.9" font-family="Liberation Sans" font-size="14.0" fill="#05281a" fill-opacity="0.41" transform="rotate(15 122.7 78.9)">€</text>
<text x="160.2" y="396.1" font-family="Liberation Sans" font-size="9.2" fill="#05281a" fill-opacity="0.35" transform="rotate(21 160.2 396.1)">a</text>
<text x="135.6" y="386.4" font-family="Liberation Sans" font-size="10.6" fill="#05281a" fill-opacity="0.60" transform="rotate(-33 135.6 386.4)">£</text>
<text x="19.4" y="284.8" font-family="Liberation Sans" font-size="9.2" fill="#05281a" fill-opacity="0.53" transform="rotate(-26 19.4 284.8)">3</text>
<text x="154.7" y="153.5" font-family="Liberation Sans" font-size="12.3" fill="#05281a" fill-opacity="0.38" transform="rotate(9 154.7 153.5)">£</text>
<text x="55.8" y="381.8" font-family="Liberation Sans" font-size="12.3" fill="#05281a" fill-opacity="0.53" transform="rotate(-37 55.8 381.8)">d</text>
<text x="88.5" y="31.4" font-family="Liberation Sans" font-size="14.3" fill="#05281a" fill-opacity="0.32" transform="rotate(3 88.5 31.4)">£</text>
<text x="116.1" y="117.2" font-family="Liberation Sans" font-size="9.0" fill="#05281a" fill-opacity="0.36" transform="rotate(7 116.1 117.2)">b</text>
<text x="194.6" y="78.1" font-family="Liberation Sans" font-size="8.4" fill="#05281a" fill-opacity="0.37" transform="rotate(5 194.6 78.1)">3</text>
<text x="176.2" y="406.9" font-family="Liberation Sans" font-size="7.3" fill="#05281a" fill-opacity="0.50" transform="rotate(42 176.2 406.9)">e</text>
<text x="-4.5" y="367.3" font-family="Liberation Sans" font-size="7.5" fill="#05281a" fill-opacity="0.53" transform="rotate(6 -4.5 367.3)">£</text>
<text x="67.6" y="271.2" font-family="Liberation Sans" font-size="13.3" fill="#05281a" fill-opacity="0.59" transform="rotate(-21 67.6 271.2)">2</text>
<text x="123.2" y="405.2" font-family="Liberation Sans" font-size="13.0" fill="#05281a" fill-opacity="0.57" transform="rotate(-33 123.2 405.2)">2</text>
<text x="28.4" y="250.5" font-family="Liberation Sans" font-size="8.9" fill="#05281a" fill-opacity="0.39" transform="rotate(5 28.4 250.5)">e</text>
<text x="139.7" y="297.3" font-family="Liberation Sans" font-size="9.1" fill="#05281a" fill-opacity="0.50" transform="rotate(-28 139.7 297.3)">2</text>
<text x="95.8" y="14.6" font-family="Liberation Sans" font-size="11.8" fill="#05281a" fill-opacity="0.46" transform="rotate(-45 95.8 14.6)">3</text>
<text x="172.9" y="133.9" font-family="Liberation Sans" font-size="11.9" fill="#05281a" fill-opacity="0.45" transform="rotate(-0 172.9 133.9)">0</text>
<text x="84.2" y="108.3" font-family="Liberation Sans" font-size="13.4" fill="#05281a" fill-opacity="0.36" transform="rotate(-39 84.2 108.3)">£</text>
<text x="124.3" y="238.7" font-family="Liberation Sans" font-size="12.8" fill="#05281a" fill-opacity="0.41" transform="rotate(-35 124.3 238.7)">0</text>
<text x="3.5" y="129.5" font-family="Liberation Sans" font-size="12.0" fill="#05281a" fill-opacity="0.57" transform="rotate(28 3.5 129.5)">2</text>
<text x="95.7" y="267.8" font-family="Liberation Sans" font-size="11.1" fill="#05281a" fill-opacity="0.36" transform="rotate(-25 95.7 267.8)">a</text>
<text x="134.5" y="342.3" font-family="Liberation Sans" font-size="13.3" fill="#05281a" fill-opacity="0.46" transform="rotate(-18 134.5 342.3)">€</text>
<text x="136.1" y="290.0" font-family="Liberation Sans" font-size="14.7" fill="#05281a" fill-opacity="0.57" transform="rotate(-1 136.1 290.0)">¢</text>
<text x="194.2" y="59.6" font-family="Liberation Sans" font-size="10.6" fill="#05281a" fill-opacity="0.30" transform="rotate(49 194.2 59.6)">3</text>
<text x="77.8" y="216.5" font-family="Liberation Sans" font-size="7.7" fill="#05281a" fill-opacity="0.45" transform="rotate(-20 77.8 216.5)">2</text>
<text x="10.5" y="14.1" font-family="Liberation Sans" font-size="15.0" fill="#05281a" fill-opacity="0.51" transform="rotate(48 10.5 14.1)">b</text>
<text x="54.7" y="49.0" font-family="Liberation Sans" font-size="13.8" fill="#05281a" fill-opacity="0.63" transform="rotate(-4 54.7 49.0)">a</text>
<text x="68.5" y="138.9" font-family="Liberation Sans" font-size="14.8" fill="#05281a" fill-opacity="0.36" transform="rotate(-28 68.5 138.9)">0</text>
<text x="113.2" y="409.8" font-family="Liberation Sans" font-size="12.9" fill="#05281a" fill-opacity="0.60" transform="rotate(19 113.2 409.8)">0</text>
<text x="114.3" y="365.2" font-family="Liberation Sans" font-size="10.7" fill="#05281a" fill-opacity="0.37" transform="rotate(44 114.3 365.2)">a</text>
<text x="71.5" y="20.3" font-family="Liberation Sans" font-size="10.3" fill="#05281a" fill-opacity="0.49" transform="rotate(-32 71.5 20.3)">c</text>
<text x="181.4" y="396.1" font-family="Liberation Sans" font-weight="700" font-size="37.6" fill="#021c10" fill-opacity="0.56" filter="url(#b2)" transform="rotate(-58 181.4 396.1)">£</text>
<text x="68.5" y="155.7" font-family="Liberation Sans" font-weight="700" font-size="34.0" fill="#021c10" fill-opacity="0.37" filter="url(#b2)" transform="rotate(-7 68.5 155.7)">t</text>
<text x="84.2" y="20.1" font-family="Liberation Sans" font-weight="700" font-size="19.9" fill="#021c10" fill-opacity="0.63" filter="url(#b2)" transform="rotate(-9 84.2 20.1)">s</text>
<text x="142.0" y="156.1" font-family="Liberation Sans" font-weight="700" font-size="19.3" fill="#021c10" fill-opacity="0.48" filter="url(#b2)" transform="rotate(11 142.0 156.1)">€</text>
<text x="118.5" y="405.1" font-family="Liberation Sans" font-weight="700" font-size="26.0" fill="#021c10" fill-opacity="0.55" filter="url(#b2)" transform="rotate(56 118.5 405.1)">d</text>
<text x="191.7" y="243.2" font-family="Liberation Sans" font-weight="700" font-size="35.9" fill="#021c10" fill-opacity="0.46" filter="url(#b2)" transform="rotate(26 191.7 243.2)">c</text>
<text x="27.7" y="82.7" font-family="Liberation Sans" font-weight="700" font-size="25.1" fill="#021c10" fill-opacity="0.49" filter="url(#b2)" transform="rotate(-37 27.7 82.7)">2</text>
<text x="10.4" y="25.8" font-family="Liberation Sans" font-weight="700" font-size="24.1" fill="#021c10" fill-opacity="0.66" filter="url(#b2)" transform="rotate(-26 10.4 25.8)">o</text>
<text x="12.6" y="376.4" font-family="Liberation Sans" font-weight="700" font-size="29.9" fill="#021c10" fill-opacity="0.54" filter="url(#b2)" transform="rotate(6 12.6 376.4)">s</text>
<text x="12.2" y="329.0" font-family="Liberation Sans" font-weight="700" font-size="33.6" fill="#021c10" fill-opacity="0.64" filter="url(#b2)" transform="rotate(-31 12.2 329.0)">s</text>
<text x="180.2" y="251.2" font-family="Liberation Sans" font-weight="700" font-size="38.8" fill="#021c10" fill-opacity="0.32" filter="url(#b2)" transform="rotate(-6 180.2 251.2)">c</text>
<text x="120.6" y="170.1" font-family="Liberation Sans" font-weight="700" font-size="21.6" fill="#021c10" fill-opacity="0.55" filter="url(#b2)" transform="rotate(22 120.6 170.1)">e</text>
<text x="156.6" y="396.2" font-family="Liberation Sans" font-weight="700" font-size="29.8" fill="#021c10" fill-opacity="0.57" filter="url(#b2)" transform="rotate(30 156.6 396.2)">s</text>
<text x="191.7" y="163.4" font-family="Liberation Sans" font-weight="700" font-size="22.3" fill="#021c10" fill-opacity="0.64" filter="url(#b2)" transform="rotate(-28 191.7 163.4)">£</text>
<text x="146.3" y="196.8" font-family="Liberation Sans" font-weight="700" font-size="24.5" fill="#021c10" fill-opacity="0.44" filter="url(#b2)" transform="rotate(-48 146.3 196.8)">£</text>
<text x="25.1" y="231.3" font-family="Liberation Sans" font-weight="700" font-size="35.9" fill="#021c10" fill-opacity="0.36" filter="url(#b2)" transform="rotate(-48 25.1 231.3)">t</text>
<text x="-7.6" y="320.1" font-family="Liberation Sans" font-weight="700" font-size="32.4" fill="#021c10" fill-opacity="0.76" filter="url(#b2)" transform="rotate(38 -7.6 320.1)">a</text>
<text x="132.4" y="177.9" font-family="Liberation Sans" font-weight="700" font-size="33.2" fill="#021c10" fill-opacity="0.42" filter="url(#b2)" transform="rotate(5 132.4 177.9)">e</text>
<text x="51.9" y="360.2" font-family="Liberation Sans" font-weight="700" font-size="31.4" fill="#021c10" fill-opacity="0.49" filter="url(#b2)" transform="rotate(39 51.9 360.2)">€</text>
<text x="120.7" y="145.3" font-family="Liberation Sans" font-weight="700" font-size="30.3" fill="#021c10" fill-opacity="0.55" filter="url(#b2)" transform="rotate(-30 120.7 145.3)">a</text>
<text x="6.3" y="238.7" font-family="Liberation Sans" font-weight="700" font-size="29.9" fill="#021c10" fill-opacity="0.55" filter="url(#b2)" transform="rotate(46 6.3 238.7)">e</text>
<text x="155.5" y="412.2" font-family="Liberation Sans" font-weight="700" font-size="24.0" fill="#021c10" fill-opacity="0.72" filter="url(#b2)" transform="rotate(-15 155.5 412.2)">d</text>
<text x="19.4" y="363.0" font-family="Liberation Sans" font-weight="700" font-size="22.5" fill="#021c10" fill-opacity="0.61" filter="url(#b2)" transform="rotate(-39 19.4 363.0)">€</text>
<text x="77.5" y="43.3" font-family="Liberation Sans" font-weight="700" font-size="33.4" fill="#021c10" fill-opacity="0.80" filter="url(#b2)" transform="rotate(12 77.5 43.3)">s</text>
<text x="139.1" y="82.3" font-family="Liberation Sans" font-weight="700" font-size="29.7" fill="#021c10" fill-opacity="0.48" filter="url(#b2)" transform="rotate(48 139.1 82.3)">t</text>
<text x="171.5" y="361.4" font-family="Liberation Sans" font-weight="700" font-size="29.0" fill="#021c10" fill-opacity="0.66" filter="url(#b2)" transform="rotate(21 171.5 361.4)">€</text>
<text x="50.4" y="140.1" font-family="Liberation Sans" font-weight="700" font-size="25.7" fill="#021c10" fill-opacity="0.78" filter="url(#b2)" transform="rotate(-27 50.4 140.1)">t</text>
<text x="23.2" y="27.4" font-family="Liberation Sans" font-weight="700" font-size="37.5" fill="#021c10" fill-opacity="0.76" filter="url(#b2)" transform="rotate(31 23.2 27.4)">s</text>
<text x="69.5" y="373.5" font-family="Liberation Sans" font-weight="700" font-size="39.7" fill="#021c10" fill-opacity="0.49" filter="url(#b2)" transform="rotate(0 69.5 373.5)">c</text>
<text x="85.8" y="59.2" font-family="Liberation Sans" font-weight="700" font-size="30.5" fill="#021c10" fill-opacity="0.46" filter="url(#b2)" transform="rotate(-59 85.8 59.2)">s</text>
<text x="152.0" y="55.3" font-family="Liberation Sans" font-weight="700" font-size="34.8" fill="#021c10" fill-opacity="0.46" filter="url(#b2)" transform="rotate(16 152.0 55.3)">o</text>
<text x="157.1" y="122.2" font-family="Liberation Sans" font-weight="700" font-size="26.0" fill="#021c10" fill-opacity="0.72" filter="url(#b2)" transform="rotate(15 157.1 122.2)">c</text>
<text x="27.3" y="217.2" font-family="Liberation Sans" font-weight="700" font-size="31.4" fill="#021c10" fill-opacity="0.33" filter="url(#b2)" transform="rotate(-25 27.3 217.2)">d</text>
<text x="179.4" y="276.5" font-family="Liberation Sans" font-weight="700" font-size="21.7" fill="#021c10" fill-opacity="0.36" filter="url(#b2)" transform="rotate(49 179.4 276.5)">£</text>
<text x="-6.0" y="258.7" font-family="Liberation Sans" font-weight="700" font-size="21.1" fill="#021c10" fill-opacity="0.49" filter="url(#b2)" transform="rotate(-4 -6.0 258.7)">t</text>
<text x="107.9" y="323.7" font-family="Liberation Sans" font-weight="700" font-size="36.1" fill="#021c10" fill-opacity="0.34" filter="url(#b2)" transform="rotate(31 107.9 323.7)">o</text>
<text x="-3.9" y="152.7" font-family="Liberation Sans" font-weight="700" font-size="21.5" fill="#021c10" fill-opacity="0.60" filter="url(#b2)" transform="rotate(-35 -3.9 152.7)">e</text>
<text x="100.4" y="359.6" font-family="Liberation Sans" font-weight="700" font-size="27.6" fill="#021c10" fill-opacity="0.53" filter="url(#b2)" transform="rotate(4 100.4 359.6)">d</text>
<text x="106.1" y="311.7" font-family="Liberation Sans" font-weight="700" font-size="28.0" fill="#021c10" fill-opacity="0.56" filter="url(#b2)" transform="rotate(-17 106.1 311.7)">c</text>
<text x="54.2" y="385.3" font-family="Liberation Sans" font-weight="700" font-size="28.8" fill="#021c10" fill-opacity="0.72" filter="url(#b2)" transform="rotate(27 54.2 385.3)">d</text>
<text x="100.8" y="95.7" font-family="Liberation Sans" font-weight="700" font-size="26.9" fill="#021c10" fill-opacity="0.71" filter="url(#b2)" transform="rotate(-55 100.8 95.7)">€</text>
<text x="87.8" y="75.2" font-family="Liberation Sans" font-weight="700" font-size="38.5" fill="#021c10" fill-opacity="0.56" filter="url(#b2)" transform="rotate(-30 87.8 75.2)">d</text>
<rect width="197" height="407" fill="url(#g1)"/>
<text x="78" y="60" font-family="Liberation Sans" font-weight="700" font-size="62" fill="#03200f" fill-opacity="0.6" filter="url(#b1)" transform="rotate(8 78 60)">t</text>
<text x="30" y="290" font-family="Liberation Sans" font-weight="700" font-size="55" fill="#021810" fill-opacity="0.85" filter="url(#b0)" transform="rotate(30 30 290)">d</text>
<text x="20" y="330" font-family="Liberation Sans" font-weight="700" font-size="50" fill="#021810" fill-opacity="0.8" filter="url(#b0)" transform="rotate(-30 20 330)">c</text>
<text x="125" y="385" font-family="Liberation Sans" font-weight="700" font-size="45" fill="#021810" fill-opacity="0.65" filter="url(#b2)" transform="rotate(15 125 385)">u</text>
<text x="60" y="395" font-family="Liberation Sans" font-weight="700" font-size="40" fill="#021810" fill-opacity="0.6" filter="url(#b2)" transform="rotate(-10 60 395)">€</text>
<text x="165" y="180" font-family="Liberation Sans" font-weight="700" font-size="45" fill="#021810" fill-opacity="0.7" filter="url(#b2)" transform="rotate(100 165 180)">c</text>
<text x="5" y="230" font-family="Liberation Sans" font-weight="700" font-size="45" fill="#021810" fill-opacity="0.6" filter="url(#b2)" transform="rotate(30 5 230)">t</text>
<text x="50" y="85" font-family="Liberation Sans" font-weight="700" font-size="48" fill="#03200f" fill-opacity="0.5" filter="url(#b1)" transform="rotate(-15 50 85)">a</text>
<text x="120" y="70" font-family="Liberation Sans" font-weight="700" font-size="50" fill="#03200f" fill-opacity="0.55" filter="url(#b1)" transform="rotate(10 120 70)">£</text>
<text x="165" y="85" font-family="Liberation Sans" font-weight="700" font-size="50" fill="#03200f" fill-opacity="0.5" filter="url(#b1)" transform="rotate(10 165 85)">t</text>
<text x="150" y="140" font-family="Liberation Sans" font-weight="700" font-size="55" fill="#03200f" fill-opacity="0.55" filter="url(#b1)" transform="rotate(-10 150 140)">e</text>
<text x="-5" y="150" font-family="Liberation Sans" font-weight="700" font-size="55" fill="#03200f" fill-opacity="0.5" filter="url(#b1)" transform="rotate(20 -5 150)">e</text>
<text x="20" y="190" font-family="Liberation Sans" font-weight="700" font-size="60" fill="#03200f" fill-opacity="0.5" filter="url(#b1)" transform="rotate(25 20 190)">c</text>
<text x="-25" y="290" font-family="Liberation Sans" font-weight="700" font-size="85" fill="#021810" fill-opacity="0.8" filter="url(#b2)" transform="rotate(35 -25 290)">c</text>
<text x="50" y="250" font-family="Liberation Sans" font-weight="700" font-size="60" fill="#021810" fill-opacity="0.55" filter="url(#b1)" transform="rotate(40 50 250)">c</text>
<text x="148" y="290" font-family="Liberation Sans" font-weight="700" font-size="62" fill="#021810" fill-opacity="0.9" filter="url(#b0)" transform="rotate(92 148 290)">c</text>
<text x="170" y="200" font-family="Liberation Sans" font-weight="700" font-size="45" fill="#03200f" fill-opacity="0.5" filter="url(#b1)" transform="rotate(-20 170 200)">e</text>
<text x="97" y="375" font-family="Liberation Sans" font-weight="700" font-size="68" fill="#021810" fill-opacity="0.8" filter="url(#b2)" transform="rotate(0 97 375)">€</text>
<text x="-12" y="390" font-family="Liberation Sans" font-weight="700" font-size="80" fill="#021810" fill-opacity="0.8" filter="url(#b2)" transform="rotate(-25 -12 390)">c</text>
<text x="58" y="405" font-family="Liberation Sans" font-weight="700" font-size="55" fill="#021810" fill-opacity="0.55" filter="url(#b1)" transform="rotate(10 58 405)">f</text>
<text x="172" y="385" font-family="Liberation Sans" font-weight="700" font-size="80" fill="#021810" fill-opacity="0.85" filter="url(#b0)" transform="rotate(10 172 385)">x</text>
<text x="40" y="330" font-family="Liberation Sans" font-weight="700" font-size="40" fill="#03200f" fill-opacity="0.45" filter="url(#b1)" transform="rotate(20 40 330)">e</text>
<text x="130" y="330" font-family="Liberation Sans" font-weight="700" font-size="45" fill="#03200f" fill-opacity="0.4" filter="url(#b1)" transform="rotate(20 130 330)">s</text>
<text x="20" y="360" font-family="Liberation Sans" font-weight="700" font-size="40" fill="#03200f" fill-opacity="0.5" filter="url(#b1)" transform="rotate(0 20 360)">ɔ</text>
<rect width="197" height="407" fill="url(#g2)"/>
<g filter="url(#b0)">
<text x="96" y="270" font-family="Liberation Sans" font-weight="700" font-size="90" fill="#021a0e" fill-opacity="0.95" transform="rotate(-10 96 270)">£</text>
<text x="91" y="264" font-family="Liberation Sans" font-weight="700" font-size="90" fill="#1b8a48" transform="rotate(-10 91 264)">£</text>
</g>
<path d="M30 2 C40 0 46 8 42 16 C39 22 34 24 32 30 L26 27 C28 20 33 17 35 12 C36 8 33 6 28 8 Z" fill="#4fd088" fill-opacity="0.85" filter="url(#b0)"/>
<g filter="url(#b0)"><path d="M182 10 L197 5 L197 13 L189 15 L189 33 L182 33 Z" fill="#24d452"/>
<path d="M187 18 L197 28 L197 44 L185 26 Z" fill="#1cb848"/>
<path d="M189 16 L197 26" stroke="#03200f" stroke-width="1.6"/></g>
<path d="M142 375 L150 370 L151 402 L160 402 L160 407 L139 407 L139 402 L145 402 L145 378 Z" fill="#22cc50" filter="url(#b0)"/>
<text x="2" y="400" font-family="Liberation Sans" font-size="11" fill="#c8d8c8" fill-opacity="0.8">lb</text>
<circle cx="174" cy="355" r="15" fill="none" stroke="#8c8598" stroke-width="1.8"/>
</svg>
<!--/PHONEBG-->
  <div class="t" style="left:37.5px;top:93px;font-size:36.6px;letter-spacing:1.2px;font-weight:700;color:#eef0ea">LOGIN</div>
  <div class="abs" style="left:5px;top:141px;width:184px;height:24px;background:#fff;border:2px solid #0a3f0c;border-radius:5px"></div>
  <div class="t" style="left:6px;top:149px;font-size:11.4px;color:#000">two@two.com</div>
  <div class="abs" style="left:5px;top:166px;width:184px;height:24px;background:#fff;border:2px solid #0a3f0c;border-radius:5px"></div>
  <div class="t" style="left:6.5px;top:171px;font-size:12px;letter-spacing:-0.6px;color:#000">******</div>
  <div class="abs" style="left:37px;top:193px;width:116px;height:22px;background:#0b4d0f"></div>
  <div class="t" style="left:37px;width:116px;text-align:center;top:199px;font-size:10px;letter-spacing:-0.35px;color:#fff">LOG IN</div>
  <div class="t" style="left:0;width:197px;text-align:center;top:222px;font-size:9.1px;font-weight:700;color:#000">Forgot password?</div>
  <div class="t" style="left:0;width:197px;text-align:center;top:241px;font-size:9.5px;font-weight:700;color:#000">Don't have a account?! SIGNUP</div>
  <div class="abs" style="left:102px;top:242px;width:24px;height:8px;background:rgba(0,0,0,0.92);transform:skewX(-10deg)"></div>
</div>

<!-- markers -->
<div class="abs" style="left:324px;top:568px;width:30px;height:30px;border-radius:5px;background:#372d2d"></div>
<div class="t" style="left:324px;width:30px;text-align:center;top:575.5px;font-size:15px;color:#f2a49d">2</div>
<div class="abs" style="left:561px;top:568px;width:30px;height:30px;border-radius:5px;background:#372d2d"></div>
<div class="t" style="left:561px;width:30px;text-align:center;top:575.5px;font-size:15px;color:#f2a49d">2</div>

<!-- timeline -->
<div class="abs" style="left:52px;top:610px;width:700px;height:6px;border-radius:0 3px 3px 0;background:#2b3338"></div>
<div class="abs" style="left:52px;top:610px;width:70px;height:6px;background:#1a73e0"></div>
<div class="abs" style="left:116px;top:604px;width:18px;height:18px;border-radius:50%;border:3px solid #1a73e0;background:#141a1d"></div>

<!-- controls -->
<div class="abs" style="left:52px;top:633px;width:125px;height:40px;border-radius:5px;background:#62d99b"></div>
<svg class="abs" style="left:90px;top:647px" width="11" height="12" viewBox="0 0 11 12"><path d="M1.3 1 L9.3 6 L1.3 11 Z" fill="#0f1414"/></svg>
<div class="t" style="left:115px;top:645px;font-size:15px;letter-spacing:0.2px;color:#0f1414">Play</div>
<div class="t" style="left:197px;top:646px;font-size:15px;letter-spacing:0.97px;color:#e3e6e7">00:13 / 02:09</div>
<div class="btn" style="left:334px;top:633px;width:40px;height:40px"></div>
<svg class="abs" style="left:334px;top:633px" width="40" height="40" viewBox="0 0 40 40"><path d="M14.5 15.3 h2 v10 h-2 z M25 15.3 v10 l-8 -5 z" fill="#eef0f0"/></svg>
<div class="btn" style="left:394px;top:633px;width:40px;height:40px"></div>
<svg class="abs" style="left:394px;top:633px" width="40" height="40" viewBox="0 0 40 40"><path d="M23.5 15.3 h2 v10 h-2 z M15 15.3 v10 l8 -5 z" fill="#eef0f0"/></svg>
<div class="btn" style="left:485px;top:638px;width:53px;height:30px;border-radius:4px"></div>
<div class="t" style="left:496px;top:644.5px;font-size:15px;color:#e3e6e7">8x</div>
<svg class="abs" style="left:517px;top:648px" width="12" height="10" viewBox="0 0 12 10"><path d="M2 2.6 L6 6.6 L10 2.6" fill="none" stroke="#e3e6e7" stroke-width="1.4"/></svg>
<div class="abs" style="left:558px;top:645px;width:30px;height:15px;border-radius:8px;background:#3a444b"></div>
<div class="abs" style="left:559px;top:646px;width:13.5px;height:13.5px;border-radius:50%;background:#fff;box-shadow:0 0 2px rgba(0,0,0,0.6)"></div>
<div class="t" style="left:599px;top:644px;font-size:15px;letter-spacing:0.45px;color:#e3e6e7">Skip inactivity</div>
<svg class="abs" style="left:720px;top:642px" width="24" height="22" viewBox="0 0 24 22" fill="none" stroke="#b9bec1" stroke-width="1.8"><path d="M3.7 8.6 V2.9 H9 M15 2.9 H20.6 V8.6 M20.6 13.4 V19.2 H15 M9 19.2 H3.7 V13.4"/></svg>

<!-- right top panel -->
<div class="panel" style="left:792px;top:92px;width:780px;height:359px;border-radius:0 5px 0 0"></div>

<!-- event trail -->
<div class="t" style="left:812px;top:115px;font-size:20px;font-weight:700;color:#f3f4f4">Event trail</div>
<div class="btn" style="left:1427px;top:112px;width:125px;height:30px;border-radius:5px"></div>
<svg class="abs" style="left:1434px;top:115px" width="24" height="24" viewBox="0 0 24 24" fill="none" stroke="#e8eaeb" stroke-width="1.4" stroke-linejoin="round">
<path d="M10.5 3.8 C11 8.6 12.3 10.3 16.9 11.3 C12.3 12.3 11 14 10.5 19.8 C10 14 8.7 12.3 3.6 11.3 C8.7 10.3 10 8.6 10.5 3.8 Z"/>
<path d="M18.6 2 V7.2 M16 4.6 H21.2" stroke-width="1.6"/>
</svg>
<div class="t" style="left:1463px;top:119px;font-size:15px;letter-spacing:0.35px;color:#eef0f0">Summarize</div>

<div class="btn" style="left:812px;top:157px;width:214px;height:30px;border-radius:5px"></div>
<svg class="abs" style="left:820px;top:161px" width="24" height="24" viewBox="0 0 24 24" fill="none" stroke="#e8eaeb" stroke-width="1.5" stroke-linecap="round">
<circle cx="9.8" cy="9.8" r="6.9"/><path d="M14.8 14.8 L20.3 20.1"/>
</svg>
<div class="t" style="left:847px;top:165px;font-size:15px;letter-spacing:0.28px;color:#a8afb3">Search in all fields</div>

<div class="abs" style="left:1036px;top:157px;width:254px;height:30px;border-radius:5px;background:#053a78"></div>
<div class="t" style="left:1046px;top:164px;font-size:15px;letter-spacing:0.45px;color:#c6dbf3">Event type</div><div class="t" style="left:1132.5px;top:164px;font-size:15px;color:#c6dbf3">=</div><div class="t" style="left:1152px;top:164px;font-size:15px;letter-spacing:0.4px;color:#c6dbf3">Mobile breadcru...</div>

<!-- rows -->
<div class="t mono" style="left:820px;top:225px;font-size:17px;letter-spacing:-1.5px;color:#eef0f0">00:00</div>
<div class="abs" style="left:893px;top:228px;width:10px;height:10px;border-radius:50%;background:#1a73e0"></div>
<div class="card" style="top:207px">
  <svg class="abs" style="left:14px;top:17px" width="12" height="16" viewBox="0 0 12 16"><path d="M3.5 4 L7.5 8 L3.5 12" fill="none" stroke="#e3e6e7" stroke-width="1.5"/></svg>
  <div class="ico" style="background:#1a2d3f"><svg width="30" height="30" viewBox="0 0 30 30" fill="none" stroke="#4a9be8" stroke-width="1.6" stroke-linecap="round" stroke-linejoin="round"><path d="M7 10.5 H22.5 M10.5 7 L7 10.5 L10.5 14 M23 19.5 H7.5 M19.5 16 L23 19.5 L19.5 23"/></svg></div>
  <div class="t" style="left:80px;top:17px;font-size:16.6px;color:#eef0f0">Replay start</div>
</div>

<div class="t mono" style="left:820px;top:287px;font-size:17px;letter-spacing:-1.5px;font-weight:700;color:#f3f4f4">00:00</div>
<div class="abs" style="left:893px;top:290px;width:10px;height:10px;border-radius:50%;background:#1a73e0"></div>
<div class="card" style="top:270px;height:51px;border:2px solid #1a73e0">
  <svg class="abs" style="left:13px;top:16px" width="12" height="16" viewBox="0 0 12 16"><path d="M3.5 4 L7.5 8 L3.5 12" fill="none" stroke="#e3e6e7" stroke-width="1.5"/></svg>
  <div class="ico" style="left:39px;top:8px;background:#2f3538"><svg width="30" height="30" viewBox="0 0 30 30" fill="none" stroke="#eceeef" stroke-width="1.25" stroke-linecap="round" stroke-linejoin="round"><path d="M15 22.2 C11.6 18.2 9 15 9 11.3 A6 6 0 0 1 21 11.3 C21 15 18.4 18.2 15 22.2 Z"/><path d="M8.8 24.5 H21.2" stroke-linecap="butt"/><rect x="14" y="10" width="2" height="2" fill="#eceeef" stroke="none"/></svg></div>
  <div class="t" style="left:79px;top:15px;font-size:16.6px;color:#eef0f0">Breadcrumb: Remote configuration changed</div>
</div>

<div class="t mono" style="left:820px;top:350px;font-size:17px;letter-spacing:-1.5px;color:#eef0f0">00:53</div>
<div class="abs" style="left:893px;top:353px;width:10px;height:10px;border-radius:50%;background:#3a4247"></div>
<div class="card" style="top:332px">
  <svg class="abs" style="left:14px;top:17px" width="12" height="16" viewBox="0 0 12 16"><path d="M3.5 4 L7.5 8 L3.5 12" fill="none" stroke="#7d8589" stroke-width="1.5"/></svg>
  <div class="ico" style="background:#22282b"><svg width="30" height="30" viewBox="0 0 30 30" fill="none" stroke="#8a9195" stroke-width="1.5" stroke-linecap="round" stroke-linejoin="round"><path d="M7 10.5 H22.5 M10.5 7 L7 10.5 L10.5 14 M23 19.5 H7.5 M19.5 16 L23 19.5 L19.5 23"/></svg></div>
  <div class="t" style="left:80px;top:17px;font-size:16.6px;color:#7f878b">nonexistent-domain-for-testing-123456789.com/api/data</div>
</div>

<div class="abs" style="left:792px;top:394px;width:780px;height:37px;overflow:hidden">
<div class="t mono" style="left:28px;top:18px;font-size:17px;letter-spacing:-1.5px;color:#eef0f0">00:55</div>
<div class="abs" style="left:101px;top:20.5px;width:10px;height:10px;border-radius:50%;background:#3a4247"></div>
<div class="card" style="left:136px;top:1px">
  <svg class="abs" style="left:14px;top:17px" width="12" height="16" viewBox="0 0 12 16"><path d="M3.5 4 L7.5 8 L3.5 12" fill="none" stroke="#7d8589" stroke-width="1.5"/></svg>
  <div class="ico" style="background:#22282b"><svg width="30" height="30" viewBox="0 0 30 30" fill="none" stroke="#8a9195" stroke-width="1.5" stroke-linecap="round" stroke-linejoin="round"><path d="M7 10.5 H22.5 M10.5 7 L7 10.5 L10.5 14 M23 19.5 H7.5 M19.5 16 L23 19.5 L19.5 23"/></svg></div>
  <div class="t" style="left:80px;top:17px;font-size:16.6px;color:#7f878b">nonexistent-domain-for-testing-123456789.com/api/data</div>
</div>
</div>

<!-- handles -->
<div class="abs" style="left:777px;top:383px;width:15px;height:50px;border-radius:6px;background:#3d474d"></div>
<div class="abs" style="left:784px;top:402px;width:2px;height:2px;background:#fff"></div>
<div class="abs" style="left:784px;top:407px;width:2px;height:2px;background:#fff"></div>
<div class="abs" style="left:784px;top:412px;width:2px;height:2px;background:#fff"></div>
<div class="abs" style="left:1157px;top:451px;width:50px;height:15px;border-radius:6px;background:#3d474d"></div>
<div class="abs" style="left:1176px;top:457px;width:2px;height:2px;background:#fff"></div>
<div class="abs" style="left:1181px;top:457px;width:2px;height:2px;background:#fff"></div>
<div class="abs" style="left:1186px;top:457px;width:2px;height:2px;background:#fff"></div>

<!-- right bottom panel -->
<div class="panel" style="left:792px;top:466px;width:780px;height:257px;border-radius:0 0 5px 0"></div>


<!-- session logs -->
<div class="t" style="left:812px;top:489px;font-size:20px;letter-spacing:-0.12px;font-weight:700;color:#f3f4f4">Session logs</div>
<div class="abs" style="left:792px;top:532px;width:780px;height:1px;background:#39434a"></div>
<div class="abs" style="left:979px;top:533px;width:1px;height:47px;background:#39434a"></div>
<div class="abs" style="left:1141px;top:533px;width:1px;height:47px;background:#39434a"></div>
<div class="t" style="left:823px;top:549px;font-size:15px;font-weight:700;color:#c9cdd0">level</div>
<div class="t" style="left:986px;top:549px;font-size:15px;font-weight:700;color:#c9cdd0">time</div>
<div class="t" style="left:1148px;top:549px;font-size:15px;font-weight:700;color:#c9cdd0">message</div>
<div class="abs" style="left:792px;top:580px;width:780px;height:1px;background:#39434a"></div>
<div class="abs" style="left:792px;top:610px;width:780px;height:1px;background:#39434a"></div>
<div class="abs" style="left:792px;top:642px;width:780px;height:1px;background:#39434a"></div>
<div class="abs" style="left:792px;top:673px;width:780px;height:1px;background:#39434a"></div>
<div class="abs" style="left:792px;top:704px;width:780px;height:1px;background:#39434a"></div>
<div class="abs" style="left:792px;top:580px;width:780px;height:143px;overflow:hidden">
  <div class="abs" style="left:6px;top:5px;width:10px;height:10px;border-radius:50%;background:#1a73e0"></div>
  <div class="t" style="left:31px;top:6.5px;font-size:15px;color:#c5d9ee">INFO</div>
  <div class="t" style="left:194px;letter-spacing:0.75px;top:6.5px;font-size:15px;color:#e3e6e7">00:00.443</div>
  <div class="t mono" style="left:356px;top:7px;font-size:16.5px;letter-spacing:-0.88px;color:#e3e6e7">Loaded configuration: HarvestConfiguration{col</div>

  <div class="abs" style="left:6px;top:37px;width:10px;height:10px;border-radius:50%;background:#1a73e0"></div>
  <div class="t" style="left:31px;top:38.5px;font-size:15px;color:#c5d9ee">INFO</div>
  <div class="t" style="left:194px;letter-spacing:0.75px;top:38.5px;font-size:15px;color:#e3e6e7">00:12.525</div>
  <div class="t mono" style="left:356px;top:39px;font-size:16.5px;letter-spacing:-0.88px;color:#e3e6e7">Logging in as two@two.com with empty reCAPTCHA</div>

  <div class="abs" style="left:6px;top:68px;width:10px;height:10px;border-radius:50%;background:#dc64e8"></div>
  <div class="t" style="left:31px;top:69.5px;font-size:15px;color:#e3e6e7">DEBUG</div>
  <div class="t" style="left:194px;letter-spacing:0.75px;top:69.5px;font-size:15px;color:#e3e6e7">00:12.923</div>
  <div class="t mono" style="left:356px;top:70px;font-size:16.5px;letter-spacing:-0.88px;color:#e3e6e7">Notifying id token listeners about user ( PDNl</div>

  <div class="abs" style="left:6px;top:99px;width:10px;height:10px;border-radius:50%;background:#dc64e8"></div>
  <div class="t" style="left:31px;top:100.5px;font-size:15px;color:#e3e6e7">DEBUG</div>
  <div class="t" style="left:194px;letter-spacing:0.75px;top:100.5px;font-size:15px;color:#e3e6e7">00:12.923</div>
  <div class="t mono" style="left:356px;top:101px;font-size:16.5px;letter-spacing:-0.88px;color:#e3e6e7">Notifying auth state listeners about user ( PD</div>

  <div class="abs" style="left:6px;top:130px;width:10px;height:10px;border-radius:50%;background:#dc64e8"></div>
  <div class="t" style="left:31px;top:131.5px;font-size:15px;color:#e3e6e7">DEBUG</div>
  <div class="t" style="left:194px;letter-spacing:0.75px;top:131.5px;font-size:15px;color:#e3e6e7">00:12.931</div>
  <div class="t mono" style="left:356px;top:132px;font-size:16.5px;letter-spacing:-0.88px;color:#e3e6e7">MainActivity: onPause called</div>
</div>

</body></html>
